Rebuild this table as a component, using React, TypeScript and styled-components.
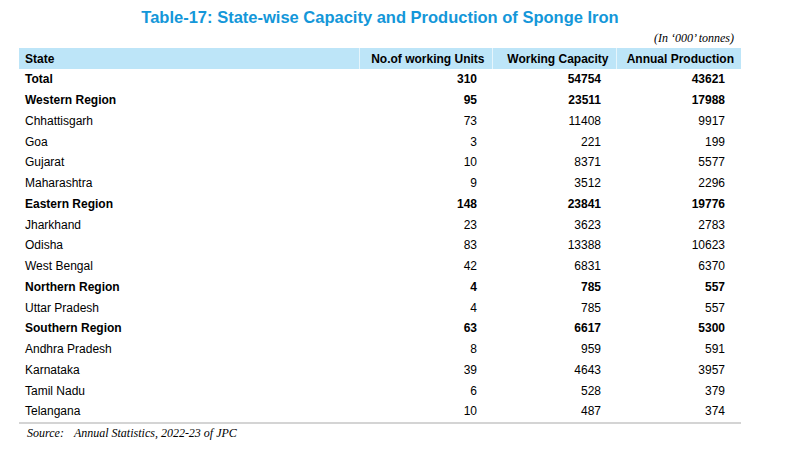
import React from "react";
import styled, { createGlobalStyle } from "styled-components";

const Global = createGlobalStyle`
  html, body { margin: 0; padding: 0; background: #ffffff; }
  body { font-family: "Liberation Sans", Arial, sans-serif; }
`;

const Page = styled.div`
  width: 803px;
  height: 455px;
  padding: 7px 0 0 19px;
  box-sizing: border-box;
`;

const Wrap = styled.div`
  width: 722px;
  display: flex;
  flex-direction: column;
`;

const Title = styled.h1`
  margin: 0;
  font-family: "Liberation Sans", Arial, sans-serif;
  font-weight: bold;
  font-size: 16.5px;
  line-height: 20px;
  color: #1497d9;
  text-align: center;
  width: 722px;
`;

const Unit = styled.div`
  font-family: "Liberation Serif", "Times New Roman", serif;
  font-style: italic;
  font-size: 12px;
  line-height: 14px;
  text-align: right;
  padding-right: 7px;
  margin-top: 4px;
  height: 17px;
`;

const Table = styled.table`
  width: 722px;
  border-collapse: collapse;
  table-layout: fixed;
  font-family: "Liberation Sans", Arial, sans-serif;
  font-size: 12px;
  color: #000;
  border-bottom: 2px solid #d4d4d4;
`;

const Th = styled.th<{ $align?: string }>`
  background: #bde5f8;
  height: 21px;
  padding: 0 7px;
  font-weight: bold;
  text-align: ${(p) => p.$align || "right"};
  border-left: 1px solid #e6f5fc;
  &:first-child { border-left: none; padding-left: 6px; }
`;

const Td = styled.td<{ $bold?: boolean }>`
  height: 20.75px;
  padding: 0 15px 0 0;
  text-align: right;
  font-weight: ${(p) => (p.$bold ? "bold" : "normal")};
  &:first-child { text-align: left; padding-left: 6px; padding-right: 0; }
  &:last-child { padding-right: 16px; }
`;

const Source = styled.div`
  font-family: "Liberation Serif", "Times New Roman", serif;
  font-style: italic;
  font-size: 12px;
  line-height: 16px;
  padding-left: 8px;
  margin-top: 1px;
`;

const Gap = styled.span`
  display: inline-block;
  width: 10px;
`;

type Row = [string, number, number, number, boolean?];

const rows: Row[] = [
  ["Total", 310, 54754, 43621, true],
  ["Western Region", 95, 23511, 17988, true],
  ["Chhattisgarh", 73, 11408, 9917],
  ["Goa", 3, 221, 199],
  ["Gujarat", 10, 8371, 5577],
  ["Maharashtra", 9, 3512, 2296],
  ["Eastern Region", 148, 23841, 19776, true],
  ["Jharkhand", 23, 3623, 2783],
  ["Odisha", 83, 13388, 10623],
  ["West Bengal", 42, 6831, 6370],
  ["Northern Region", 4, 785, 557, true],
  ["Uttar Pradesh", 4, 785, 557],
  ["Southern Region", 63, 6617, 5300, true],
  ["Andhra Pradesh", 8, 959, 591],
  ["Karnataka", 39, 4643, 3957],
  ["Tamil Nadu", 6, 528, 379],
  ["Telangana", 10, 487, 374],
];

export default function App() {
  return (
    <Page>
      <Global />
      <Wrap>
        <Title>Table-17: State-wise Capacity and Production of Sponge Iron</Title>
        <Unit>(In ‘000’ tonnes)</Unit>
        <Table>
          <colgroup>
            <col style={{ width: 340 }} />
            <col style={{ width: 133 }} />
            <col style={{ width: 124 }} />
            <col style={{ width: 125 }} />
          </colgroup>
          <thead>
            <tr>
              <Th $align="left">State</Th>
              <Th>No.of working Units</Th>
              <Th>Working Capacity</Th>
              <Th>Annual Production</Th>
            </tr>
          </thead>
          <tbody>
            {rows.map(([name, u, c, p, b]) => (
              <tr key={name}>
                <Td $bold={b}>{name}</Td>
                <Td $bold={b}>{u}</Td>
                <Td $bold={b}>{c}</Td>
                <Td $bold={b}>{p}</Td>
              </tr>
            ))}
          </tbody>
        </Table>
        <Source>
          Source:<Gap />Annual Statistics, 2022-23 of JPC
        </Source>
      </Wrap>
    </Page>
  );
}
